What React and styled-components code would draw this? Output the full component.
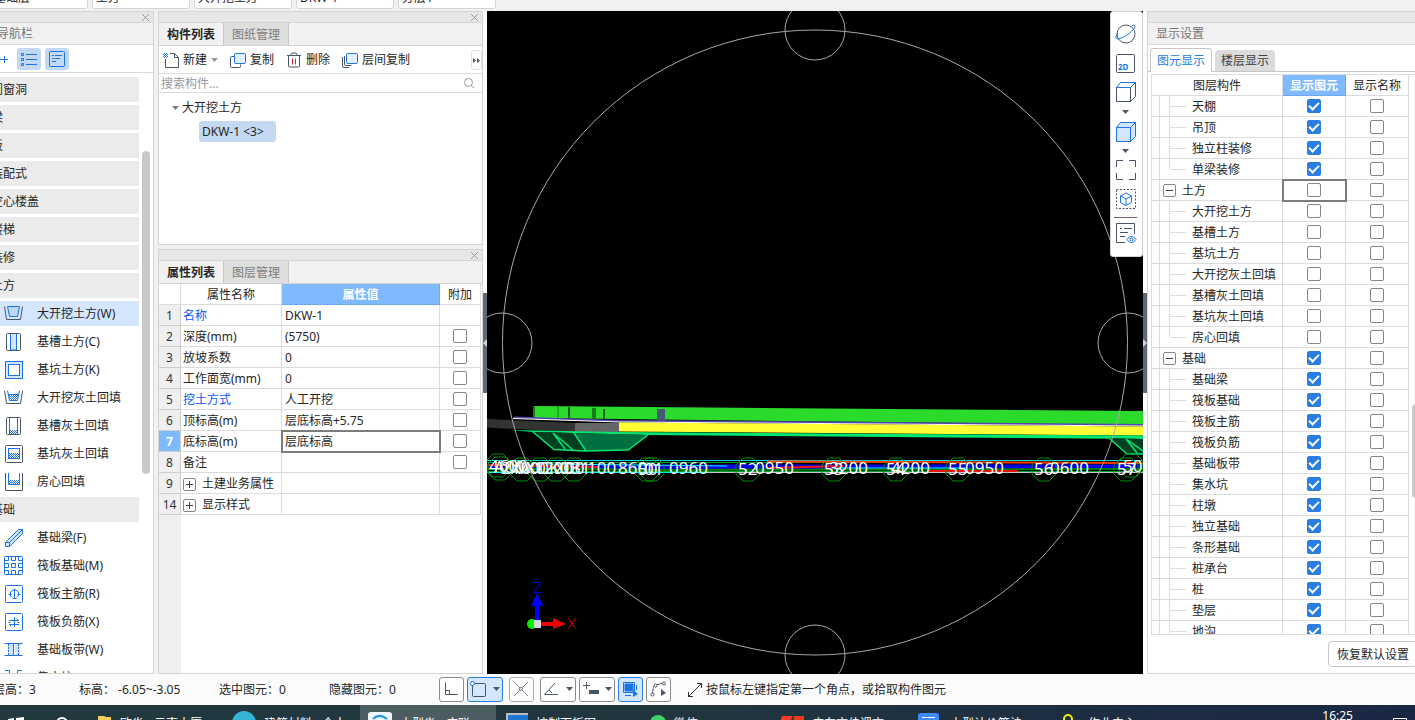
import { useState } from "react";
import styled, { createGlobalStyle } from "styled-components";

const GlobalStyle = createGlobalStyle`
* {
    box-sizing: border-box;
}
body {
    margin: 0;
    overflow: hidden;
    background: #f1f1f1;
}
body, button, input, select {
    font-family: "Noto Sans", "Noto Sans CJK SC", sans-serif;
    font-size: 12px;
    line-height: 20px;
    color: #262626;
}
button {
    padding: 0;
    border: 0;
    background: none;
    white-space: nowrap;
}
svg {
    display: block;
    flex: none;
}
`

const Page = styled.div`
display: flex;
flex-direction: column;
height: 100vh;
overflow: hidden;
`

/* top selectors */

const TopBar = styled.div`
display: flex;
align-items: flex-end;
gap: 4px;
height: 11px;
flex: none;
margin-left: -10px;
padding-bottom: 2px;
overflow: hidden;
`

const TopSelect = styled.select`
appearance: none;
width: 98px;
height: 22px;
flex: none;
padding: 0 3px;
background: #fff;
border: 1px solid #d4d4d4;
border-radius: 3px;
`

/* panels */

const Workspace = styled.div`
display: flex;
flex: 1;
min-height: 0;
margin-left: -12px;
`

const Panel = styled.section`
display: flex;
flex-direction: column;
min-height: 0;
background: #fff;
border: 1px solid #d4d4d4;
overflow: hidden;
`

const NavPanel = styled(Panel)`
width: 166px;
flex: none;
margin-right: 4px;
`

const MiddleColumn = styled.div`
display: flex;
flex-direction: column;
gap: 4px;
width: 325px;
flex: none;
`

const ComponentPanel = styled(Panel)`
height: 234px;
flex: none;
`

const PropertyPanel = styled(Panel)`
flex: 1;
`

const DisplayPanel = styled(Panel)`
width: 275px;
flex: none;
margin-right: -7px;
`

const Grip = styled.div`
display: flex;
justify-content: flex-end;
align-items: center;
height: 11px;
flex: none;
padding-right: 3px;
background: #e7e7e7;
border-bottom: 1px solid #d4d4d4;
`

const PanelTitle = styled.div`
height: 22px;
flex: none;
padding: 0 8px;
line-height: 22px;
color: #757575;
background: #f1f1f1;
border-bottom: 1px solid #d9d9d9;
`

const Tabs = styled.div`
display: flex;
height: 23px;
flex: none;
background: #f1f1f1;
border-bottom: 1px solid #d4d4d4;
`

const Tab = styled.button`
width: 65px;
padding-top: 2px;
font-weight: ${p => p.$active ? "bold" : "normal"};
color: ${p => p.$active ? "#262626" : "#7d7d7d"};
background: ${p => p.$active ? "#f1f1f1" : "#dedede"};
border-right: 1px solid #c3c6cb;
`

/* navigation */

const NavTools = styled.div`
display: flex;
align-items: center;
gap: 4px;
height: 28px;
flex: none;
padding-left: 5px;
border-bottom: 1px solid #d9d9d9;
`

const NavTool = styled.button`
display: flex;
justify-content: center;
align-items: center;
width: ${p => p.$active ? 24 : 19}px;
height: 22px;
background: ${p => p.$active ? "#c2d9f1" : "none"};
border-radius: 3px;
`

const NavBody = styled.div`
display: flex;
flex: 1;
min-height: 0;
overflow: hidden;
`

const NavList = styled.div`
display: flex;
flex-direction: column;
gap: 3px;
flex: 1;
padding-top: 4px;
`

const NavGroup = styled.button`
height: 25px;
flex: none;
padding-left: 2px;
text-align: left;
background: #ebebeb;
`

const NavItem = styled.button`
display: flex;
align-items: center;
gap: 13px;
height: 25px;
flex: none;
padding-left: 15px;
text-align: left;
background: ${p => p.$active ? "#d3e6fd" : "none"};
`

const NavTrack = styled.div`
width: 14px;
padding: 78px 3px 0;
`

const Thumb = styled.div`
width: 8px;
height: ${p => p.$size}px;
background: #c9c9c9;
border-radius: 4px;
`

/* component list */

const Tools = styled.div`
display: flex;
align-items: center;
gap: 12px;
height: 28px;
flex: none;
padding: 1px 0 0 4px;
border-bottom: 1px solid #dcdcdc;
`

const Tool = styled.button`
display: flex;
align-items: center;
gap: 4px;
`

const MoreTools = styled.button`
display: flex;
justify-content: center;
align-items: center;
width: 11px;
height: 20px;
margin-left: auto;
border: 1px solid #e0e0e0;
border-radius: 3px;
`

const Search = styled.label`
display: flex;
align-items: center;
height: 19px;
flex: none;
padding: 0 7px 0 2px;
border-bottom: 1px solid #dcdcdc;
`

const SearchInput = styled.input`
flex: 1;
height: 18px;
padding: 2px 0 0;
border: 0;
outline: 0;
&::placeholder {
    color: #999;
}
`

const Tree = styled.div`
display: flex;
flex-direction: column;
align-items: flex-start;
gap: 3px;
padding: 5px 13px;
`

const TreeParent = styled.button`
display: flex;
align-items: center;
gap: 3px;
height: 20px;
`

const TreeLeaf = styled.button`
min-width: 77px;
height: 21px;
margin-left: 27px;
padding: 0 3px;
text-align: left;
background: #c2d9f1;
border-radius: 3px;
`

/* tables */

const GridTable = styled.table`
table-layout: fixed;
border-collapse: separate;
border-spacing: 0;
`

const HeadCell = styled.th`
height: 21px;
padding: 2px 0 0;
line-height: 18px;
font-weight: ${p => p.$active ? "bold" : "normal"};
color: ${p => p.$active ? "#fff" : "#262626"};
background: ${p => p.$active ? "#7fbaff" : "#fff"};
border: 0 solid ${p => p.$active ? "#6ba9ee" : "#dcdcdc"};
border-width: 0 1px 1px 0;
`

const Cell = styled.td`
height: 21px;
padding: ${p => p.$name ? "2px 2px 0" : "2px 3px 0"};
line-height: 18px;
white-space: nowrap;
color: ${p => p.$link ? "#0f55ff" : "#262626"};
border: 0 solid #dcdcdc;
border-width: 0 1px 1px 0;
outline: ${p => p.$focused ? "2px solid #7c7c7c" : "none"};
outline-offset: -1px;
`

const FlushCell = styled(Cell)`
padding: 0;
`

const IndexCell = styled.td`
height: 21px;
padding: 2px 0 0;
line-height: 18px;
text-align: center;
font-weight: ${p => p.$active ? "bold" : "normal"};
color: ${p => p.$active ? "#fff" : "#333"};
background: ${p => p.$active ? "#7fbaff" : "#efefef"};
border: 0 solid #cdcdcd;
border-width: 0 1px 1px 0;
`

const PropertyBody = styled.div`
flex: 1;
background: linear-gradient(to right, #efefef 22px, #fff 22px);
`

const Expandable = styled.span`
display: flex;
align-items: center;
gap: 6px;
`

const ToggleButton = styled.button`
display: flex;
justify-content: center;
align-items: center;
width: 13px;
height: 13px;
flex: none;
background: #fff;
border: 1px solid #858585;
border-radius: 2px;
`

const Check = styled.input`
appearance: none;
display: block;
width: 14px;
height: 14px;
margin: 0 auto;
background: #fff;
border: 1px solid #858585;
border-radius: 2px;
&:checked {
    background: #2a7de1;
    border-color: #2a7de1;
}
&:checked::after {
    content: "";
    display: block;
    width: 4px;
    height: 8px;
    margin: 0 auto;
    border: solid #fff;
    border-width: 0 2px 2px 0;
    transform: rotate(45deg);
}
`

/* display settings */

const PillTabs = styled.div`
display: flex;
align-items: flex-end;
gap: 3px;
height: 27px;
flex: none;
padding-left: 2px;
border-bottom: 1px solid #c6c6c6;
`

const PillTab = styled.button`
width: ${p => p.$active ? 62 : 60}px;
height: ${p => p.$active ? 24 : 21}px;
margin-bottom: ${p => p.$active ? -1 : 0}px;
color: ${p => p.$active ? "#2a7de1" : "#404040"};
background: ${p => p.$active ? "#fff" : "#dcdcdc"};
border: ${p => p.$active ? "1px solid #c6c6c6" : "0"};
border-bottom: 0;
border-radius: 4px 4px 0 0;
`

const LayerBody = styled.div`
display: flex;
flex: 1;
min-height: 0;
margin: 2px 0 0 3px;
border: 1px solid #dcdcdc;
overflow: hidden;
`

const LayerTrack = styled.div`
padding: 329px 0 0 3px;
`

const LayerName = styled.span`
display: flex;
align-items: center;
height: 20px;
`

const Guide = styled.span`
width: ${p => p.$width}px;
height: ${p => p.$half ? 10 : 20}px;
align-self: flex-start;
border-right: 1px solid #dcdcdc;
`

const Stub = styled.span`
width: ${p => p.$width}px;
height: 1px;
background: #dcdcdc;
`

const LayerText = styled.label`
margin-left: 6px;
padding-top: 2px;
`

const Footer = styled.div`
display: flex;
justify-content: flex-end;
align-items: center;
height: 38px;
flex: none;
padding-right: 3px;
`

const ResetButton = styled.button`
height: 26px;
padding: 2px 8px 0;
background: #fff;
border: 1px solid #c6c6c6;
border-radius: 4px;
`

/* model view */

const Splitter = styled.div`
display: flex;
align-items: center;
width: 4px;
flex: none;
background: #fff;
`

const SplitterHandle = styled.button`
display: flex;
justify-content: center;
align-items: center;
width: 4px;
height: 100px;
background: #5e6a78;
`

const Viewport = styled.main`
position: relative;
flex: 1;
min-width: 0;
background: #000;
overflow: hidden;
`

const ViewTools = styled.div`
position: absolute;
top: 0;
right: 0;
display: flex;
flex-direction: column;
align-items: center;
width: 33px;
height: 246px;
padding: 11px 2px 0 0;
background: #fff;
border: 1px solid #d4d4d4;
border-radius: 3px;
`

const ViewTool = styled.button`
display: flex;
justify-content: center;
align-items: center;
width: 24px;
height: ${p => p.$height}px;
`

const ViewDivider = styled.hr`
width: 23px;
margin: 0 0 2px;
border: 0;
border-top: 1px solid #666;
`

/* status bar */

const StatusBar = styled.footer`
display: flex;
align-items: center;
height: 31px;
flex: none;
margin-left: -7px;
background: #fbfbfb;
`

const Status = styled.span`
width: ${p => p.$width}px;
flex: none;
white-space: pre;
`

const StatusTools = styled.div`
display: flex;
gap: 3px;
margin-right: 16px;
`

const StatusTool = styled.button`
display: flex;
justify-content: center;
align-items: center;
gap: 6px;
width: ${p => p.$wide ? 36 : 25}px;
height: 25px;
margin-right: ${p => p.$spaced ? 3 : 0}px;
background: ${p => p.$active ? "#d3e6fd" : "#fff"};
border: 1px solid ${p => p.$active ? "#2a7de1" : "#8c8c8c"};
border-radius: 3px;
opacity: ${p => p.$faded ? 0.7 : 1};
`

const Hint = styled.span`
display: flex;
align-items: center;
gap: 3px;
white-space: nowrap;
`

/* taskbar */

const Taskbar = styled.div`
display: flex;
align-items: flex-start;
height: 15px;
flex: none;
background: linear-gradient(to right, #22393f, #21353f 50%, #1a2744);
overflow: hidden;
`

const Task = styled.button`
display: flex;
align-items: flex-start;
gap: 8px;
width: ${p => p.$width}px;
height: 40px;
flex: none;
padding-left: 8px;
color: #fff;
text-align: left;
background: ${p => p.$active ? "#4b5d63" : "none"};
overflow: hidden;
`

const TaskText = styled.span`
padding-top: 9px;
`

const Tray = styled.div`
display: flex;
margin-left: auto;
padding-right: 7px;
color: #fff;
`

const Clock = styled.time`
margin-right: 39px;
padding-top: 1px;
`

const BLUE = "#1a73e8";
const DARK = "#4a5568";

const CloseIcon = () => (
    <svg width="9" height="9" fill="none" stroke="#999">
        <path d="M1 1l7 7M8 1l-7 7" />
    </svg>
);

const Caret = ({ color = DARK }) => (
    <svg width="7" height="5" fill={color}>
        <path d="M0 0h7l-3.500 4z" />
    </svg>
);

const ToggleIcon = ({ plus }) => (
    <svg width="7" height="7" stroke="#404040">
        <path d={plus ? "M0 3.500h7M3.500 0v7" : "M0 3.500h7"} />
    </svg>
);

const Dots = () => (
    <pattern id="dots" width="2" height="2" patternUnits="userSpaceOnUse">
        <path d="M0 0h1v1h-1zM1 1h1v1h-1z" fill={BLUE} />
    </pattern>
);

const navIcons = {
    pit: <><path d="M.5 2.500l2 13h14l2-13" stroke={DARK} /><path d="M3.500 2.500h12l-2 10h-8z" fill="#bcd8fa" stroke={BLUE} /></>,
    trench: <><rect x="2.500" y="1.500" width="14" height="17" rx="1" stroke={DARK} /><path d="M6.500 2v16h6V2" fill="#d3e6fd" stroke={BLUE} /></>,
    hole: <><rect x="1.500" y="1.500" width="17" height="17" fill="#d3e6fd" stroke={BLUE} /><rect x="4.500" y="4.500" width="11" height="11" fill="#fff" stroke={BLUE} /></>,
    pitFill: <><path d="M.5 2.500l2 13h14l2-13" stroke={DARK} /><path d="M4.500 7h10l-1 5h-8z" fill="url(#dots)" /><path d="M3.500 2.500l2 10h8l2-10M4 6.500h11" stroke={BLUE} /></>,
    trenchFill: <><rect x="2.500" y="1.500" width="14" height="17" rx="1" stroke={DARK} /><path d="M6 14h7v4H6z" fill="url(#dots)" /><path d="M5.500 2v16M13.500 2v16" stroke={BLUE} /></>,
    holeFill: <><rect x="1.500" y="1.500" width="17" height="17" rx="1" stroke={DARK} /><path d="M5 9h10v6H5z" fill="url(#dots)" /><rect x="4.500" y="4.500" width="11" height="10" stroke={BLUE} /></>,
    roomFill: <><path d="M1.500 1v17.500h17V1" stroke={DARK} /><path d="M5 8h10v4H5z" fill="url(#dots)" /><path d="M4.500 1v11.500h11V1" stroke={BLUE} /></>,
    beam: <><path d="M1.500 14.500L14.500 1.500h4v4L5.500 18.500h-4z" fill="#d3e6fd" stroke={BLUE} /><path d="M1.500 14.500h4v4M5.500 14.500l13-13" stroke={BLUE} /></>,
    raft: <><rect x=".5" y=".5" width="18" height="18" rx="1" stroke={BLUE} /><path d="M4.500 .5v4h-4M.5 7.500h4v4h-4M.5 14.500h4v4M7.500 .5v4h4v-4M14.500 .5v4h4M18.500 7.500h-4v4h4M18.500 14.500h-4v4M7.500 18.500v-4h4v4M7.500 7.500h4v4h-4z" stroke={BLUE} /></>,
    rebarMain: <><rect x="1.500" y="1.500" width="17" height="17" rx="1" stroke={BLUE} /><path d="M10.500 5v10M10 5.500L6.500 8v4L8 13.500M11 5.500L14.500 8v4l-2 1.500M4.500 10.500h3M13.500 10.500h3M8.500 14.500h4" stroke={BLUE} /></>,
    rebarNeg: <><rect x="1.500" y="1.500" width="17" height="17" rx="1" stroke={BLUE} /><path d="M10.500 5v10M5 8.500h9.500l-2-2M15 12.500H5.500l2 2M4.500 10.500h2M13.500 10.500h2" stroke={BLUE} /></>,
    band: <><path d="M4 4h5v12H4zM11 4h5v12h-5z" fill="#d3e6fd" /><path d="M.5 3.500h18M.5 15.500h18M9.500 4v12" stroke={BLUE} /><path d="M4.500 4v12M14.500 4v12" stroke={BLUE} strokeDasharray="2 1" /></>,
    sump: <path d="M1 2.500h4.500v9h8v-9H18" stroke={BLUE} />,
};

const NavIcon = ({ name }) => (
    <svg width="20" height="20" fill="none">
        <defs><Dots /></defs>
        {navIcons[name]}
    </svg>
);

const toolIcons = {
    new: <><path d="M7 1.500h4.500l4 4v10h-13V7M11.500 1.500v4h4" stroke={DARK} /><path d="M0 1h5v5H0z" fill="url(#dots)" /></>,
    copy: <><path d="M4.500 4.500h-3a1 1 0 0 0-1 1v9a1 1 0 0 0 1 1h8a1 1 0 0 0 1-1v-2" stroke={DARK} /><rect x="4.500" y="1.500" width="11" height="10" rx="1" fill="#e3effd" stroke={BLUE} /></>,
    trash: <><path d="M1 3.500h14M4.500 3l1.500-2h4l1.500 2M2.500 4v10a1 1 0 0 0 1 1h9a1 1 0 0 0 1-1V4" stroke={DARK} /><path d="M6.500 6.500v6M9.500 6.500v6" stroke="#cf2a2a" /></>,
    layers: <><path d="M.5 5v9a1.500 1.500 0 0 0 1.500 1.500h5M2.500 4v8.500a1 1 0 0 0 1 1h6" stroke={DARK} /><rect x="4.500" y="1.500" width="11" height="10" rx="1" fill="#e3effd" stroke={BLUE} /></>,
};

const ToolIcon = ({ name }) => (
    <svg width="16" height="17" fill="none">{toolIcons[name]}</svg>
);

const viewIcons = {
    orbit: <><circle cx="11" cy="11" r="9" stroke={DARK} /><path d="M3 10c-2.500 3.500-3 6 0 5.800 4-.2 11-4.500 15-9C20.500 4 21 2 17 2.500" stroke={BLUE} /></>,
    flat: <><rect x="1.500" y="2.500" width="18" height="18" rx="1" stroke={DARK} /><text x="3" y="18" fontSize="8" fontWeight="bold" fill={BLUE}>2D</text></>,
    cube: <><path d="M1.500 6.500h14v14h-14zM15.500 20.500l5-5v-14" stroke={DARK} /><path d="M1.500 6.500l4-5h15l-5 5z" stroke={BLUE} /></>,
    solid: <><path d="M1.500 6.500l4-5h15v14l-5 5h-14z" fill="#d3e6fd" stroke={BLUE} /><path d="M1.500 6.500h14v14M15.500 6.500l5-5" stroke={BLUE} /></>,
    fit: <path d="M1.500 8V1.500H8M14 1.500h6.500V8M20.500 14v6.500H14M8 20.500H1.500V14" stroke={DARK} />,
    pick: <><rect x="1.500" y="1.500" width="19" height="19" stroke={DARK} strokeDasharray="2 1.500" /><path d="M11 5l5.500 3v6.500L11 17.500 5.500 14.500V8zM5.500 8L11 11l5.500-3M11 11v6.500" stroke={BLUE} /></>,
    list: <><path d="M10 20.500H1.500v-19h18V12M5 6.500h2M9 6.500h8M5 10.500h8M5 14.500h5" stroke={DARK} /><path d="M12 17.500c2.500-4 6.500-4 9 0-2.500 4-6.500 4-9 0z" fill="#fff" stroke={BLUE} /><circle cx="16.500" cy="17.500" r="1.500" stroke={BLUE} /></>,
};

const ViewIcon = ({ name }) => (
    <svg width="22" height="22" fill="none">{viewIcons[name]}</svg>
);

const statusIcons = {
    ortho: <path d="M2.500 1.500v12H15M2.500 9.500h4v4" stroke={DARK} />,
    rect: <><rect x="2.500" y="2.500" width="13" height="13" rx="1" stroke={DARK} /><circle cx="2.500" cy="2.500" r="2" fill="#fff" stroke={BLUE} /></>,
    cross: <><path d="M1 1l14 14M15 1L1 15" stroke={DARK} /><circle cx="8" cy="8" r="1.500" fill="#fff" stroke={DARK} /></>,
    angle: <path d="M12 2L1.500 13.500H15M6 9l3 3" stroke={DARK} />,
    offset: <><path d="M1 4.500h7M4.500 1v7" stroke={DARK} /><rect x="7" y="9" width="10" height="4" fill={DARK} /></>,
    stack: <><path d="M1.500 1.500h11v10h-11z" stroke={BLUE} /><path d="M3 3h8v7H3z" fill={BLUE} stroke={BLUE} /><path d="M3 14.500h6M14.500 4v5" stroke={BLUE} /><path d="M11 9l5 4-5 3z" fill={BLUE} /></>,
    arc: <><path d="M2.500 13C3 7 4 4.500 5 4l9-2" stroke={DARK} /><circle cx="2.500" cy="13.500" r="1.500" fill="#fff" stroke={DARK} /><circle cx="5.500" cy="4.500" r="1.500" fill="#fff" stroke={DARK} /><circle cx="14" cy="2.500" r="1.500" fill="#fff" stroke={DARK} /><path d="M11 8l5 4-5 3z" fill={DARK} /></>,
};

const StatusIcon = ({ name }) => (
    <svg width="17" height="17" fill="none">{statusIcons[name]}</svg>
);

const navEntries = [
    { label: "门窗洞" },
    { label: "梁" },
    { label: "板" },
    { label: "装配式" },
    { label: "空心楼盖" },
    { label: "楼梯" },
    { label: "装修" },
    { label: "土方" },
    { label: "大开挖土方(W)", icon: "pit" },
    { label: "基槽土方(C)", icon: "trench" },
    { label: "基坑土方(K)", icon: "hole" },
    { label: "大开挖灰土回填", icon: "pitFill" },
    { label: "基槽灰土回填", icon: "trenchFill" },
    { label: "基坑灰土回填", icon: "holeFill" },
    { label: "房心回填", icon: "roomFill" },
    { label: "基础" },
    { label: "基础梁(F)", icon: "beam" },
    { label: "筏板基础(M)", icon: "raft" },
    { label: "筏板主筋(R)", icon: "rebarMain" },
    { label: "筏板负筋(X)", icon: "rebarNeg" },
    { label: "基础板带(W)", icon: "band" },
    { label: "集水坑(K)", icon: "sump" },
];

const properties = [
    { no: 1, name: "名称", value: "DKW-1", link: true },
    { no: 2, name: "深度(mm)", value: "(5750)", extra: true },
    { no: 3, name: "放坡系数", value: "0", extra: true },
    { no: 4, name: "工作面宽(mm)", value: "0", extra: true },
    { no: 5, name: "挖土方式", value: "人工开挖", link: true, extra: true },
    { no: 6, name: "顶标高(m)", value: "层底标高+5.75", extra: true },
    { no: 7, name: "底标高(m)", value: "层底标高", extra: true },
    { no: 8, name: "备注", value: "", extra: true },
    { no: 9, name: "土建业务属性", group: true },
    { no: 14, name: "显示样式", group: true },
];

const layer = (name, shown, extra) => ({ name, shown, ...extra });

const initialLayers = [
    layer("天棚", true),
    layer("吊顶", true),
    layer("独立柱装修", true),
    layer("单梁装修", true, { last: true }),
    layer("土方", false, { group: true, focused: true }),
    layer("大开挖土方", false),
    layer("基槽土方", false),
    layer("基坑土方", false),
    layer("大开挖灰土回填", false),
    layer("基槽灰土回填", false),
    layer("基坑灰土回填", false),
    layer("房心回填", false, { last: true }),
    layer("基础", true, { group: true }),
    layer("基础梁", true),
    layer("筏板基础", true),
    layer("筏板主筋", true),
    layer("筏板负筋", true),
    layer("基础板带", true),
    layer("集水坑", true),
    layer("柱墩", true),
    layer("独立基础", true),
    layer("条形基础", true),
    layer("桩承台", true),
    layer("桩", true),
    layer("垫层", true),
    layer("地沟", true),
];

const Navigation = () => {
    const [active, setActive] = useState("大开挖土方(W)");

    return (
        <NavPanel>
            <Grip><CloseIcon /></Grip>
            <PanelTitle>导航栏</PanelTitle>
            <NavTools>
                <NavTool type="button" aria-label="展开">
                    <svg width="12" height="12" stroke={BLUE}><path d="M1 6.500h9M6.500 3v7" /></svg>
                </NavTool>
                <NavTool $active type="button" aria-label="列表">
                    <svg width="16" height="14" fill="none" stroke={BLUE}>
                        <path d="M5 2.500h11M5 7.500h11M5 12.500h11" />
                        <path d="M.5 1.500h2v2h-2zM.5 6.500h2v2h-2zM.5 11.500h2v2h-2z" />
                    </svg>
                </NavTool>
                <NavTool $active type="button" aria-label="分组">
                    <svg width="16" height="16" fill="none" stroke={BLUE}>
                        <rect x=".5" y=".5" width="15" height="15" rx="1" />
                        <path d="M3 4.500h2M6 4.500h7M3 7.500h2M6 7.500h5M3 10.500h4" />
                    </svg>
                </NavTool>
            </NavTools>
            <NavBody>
                <NavList>
                    {navEntries.map(({ label, icon }) => icon ? (
                        <NavItem key={label} type="button" $active={label === active} onClick={() => setActive(label)}>
                            <NavIcon name={icon} />
                            {label}
                        </NavItem>
                    ) : (
                        <NavGroup key={label} type="button">{label}</NavGroup>
                    ))}
                </NavList>
                <NavTrack><Thumb $size={323} /></NavTrack>
            </NavBody>
        </NavPanel>
    );
};

const ComponentList = () => (
    <ComponentPanel>
        <Grip><CloseIcon /></Grip>
        <Tabs>
            <Tab $active type="button">构件列表</Tab>
            <Tab type="button">图纸管理</Tab>
        </Tabs>
        <Tools>
            <Tool type="button"><ToolIcon name="new" />新建 <Caret color="#999" /></Tool>
            <Tool type="button"><ToolIcon name="copy" />复制</Tool>
            <Tool type="button"><ToolIcon name="trash" />删除</Tool>
            <Tool type="button"><ToolIcon name="layers" />层间复制</Tool>
            <MoreTools type="button" aria-label="更多">
                <svg width="7" height="5" fill={DARK}><path d="M0 0l3 2.500-3 2.500zM4 0l3 2.500-3 2.500z" /></svg>
            </MoreTools>
        </Tools>
        <Search>
            <SearchInput placeholder="搜索构件..." aria-label="搜索构件" />
            <svg width="12" height="12" fill="none" stroke="#999">
                <circle cx="5.500" cy="5.500" r="4" />
                <path d="M8.500 8.500l2.500 2.500" />
            </svg>
        </Search>
        <Tree>
            <TreeParent type="button"><Caret color="#7d7d7d" />大开挖土方</TreeParent>
            <TreeLeaf type="button">DKW-1 &lt;3&gt;</TreeLeaf>
        </Tree>
    </ComponentPanel>
);

const PropertyList = () => (
    <PropertyPanel>
        <Grip><CloseIcon /></Grip>
        <Tabs>
            <Tab $active type="button">属性列表</Tab>
            <Tab type="button">图层管理</Tab>
        </Tabs>
        <PropertyBody>
            <GridTable style={{ width: 322, background: "#fff" }}>
                <colgroup>
                    <col width="22" />
                    <col width="101" />
                    <col width="158" />
                    <col width="41" />
                </colgroup>
                <thead>
                    <tr>
                        <HeadCell />
                        <HeadCell>属性名称</HeadCell>
                        <HeadCell $active>属性值</HeadCell>
                        <HeadCell>附加</HeadCell>
                    </tr>
                </thead>
                <tbody>
                    {properties.map(p => (
                        <tr key={p.no}>
                            <IndexCell $active={p.no === 7}>{p.no}</IndexCell>
                            <Cell $name $link={p.link}>
                                {p.group ? (
                                    <Expandable>
                                        <ToggleButton type="button" aria-label={p.name}><ToggleIcon plus /></ToggleButton>
                                        {p.name}
                                    </Expandable>
                                ) : p.name}
                            </Cell>
                            <Cell $focused={p.no === 7}>{p.value}</Cell>
                            <FlushCell>
                                {p.extra && <Check type="checkbox" aria-label={`${p.name} 附加`} />}
                            </FlushCell>
                        </tr>
                    ))}
                </tbody>
            </GridTable>
        </PropertyBody>
    </PropertyPanel>
);

const axisCircles = [[11, 454], [13, 457], [35, 458], [53, 458], [69, 458], [87, 458], [160, 458], [165, 458], [261, 458], [347, 458], [409, 458], [471, 458], [557, 458], [639, 458], [644, 454]];

const axisLabels = [
    [2, 461, "4600"], [7, 462, "A00"], [14, 463, "2X0"], [27, 463, "M00"], [39, 463, "X0"], [47, 463, "1200"], [62, 463, "K0"], [68, 463, "X00"], [84, 463, "31"],
    [100, 463, "100"], [131, 463, "860"], [151, 464, "50"], [157, 464, "01"], [182, 463, "0960"],
    [251, 464, "52"], [268, 463, "0950"], [337, 464, "53"], [342, 463, "3200"], [399, 464, "54"], [404, 463, "4200"],
    [461, 464, "55"], [478, 463, "0950"], [547, 464, "56"], [563, 463, "0600"], [630, 464, "57"], [636, 461, "50)"],
];

const Model = () => (
    <svg width="100%" height="100%" viewBox="0 0 656 663" preserveAspectRatio="xMidYMid slice" fill="none">
        <path d="M46 395L656 400v14L46 407z" fill="#2bdb2b" />
        <path d="M71 395v12" stroke="#167a16" />
        <path d="M82 396v12M117 398v10" stroke="#0e5c0e" strokeWidth="2" />
        <path d="M107 397v11" stroke="#167a16" strokeWidth="4" />
        <path d="M47 395v12" stroke="#167a16" strokeWidth="2" />
        <path d="M170 398h8v12h-8z" fill="#44587a" />
        <path d="M27 406.500l105 3.500 524 4" stroke="#5149a8" strokeWidth="2" />
        <path d="M26 407.500l106 3.500 524 4" stroke="#fff" />
        <path d="M0 408l88 4v9L0 416.500z" fill="#333" />
        <path d="M88 412h44v9H88z" fill="#666" />
        <path d="M132 411.500l524 4v9l-524-4z" fill="#ffff33" />
        <path d="M23 419l109 2 524 3.500v3.500l-495-4-115-3z" fill="#00e673" />
        <path d="M46 421l21 17.500 32 1.500-12-18z" fill="#004020" />
        <path d="M87 422l12 18 42-1 20-15z" fill="#007040" />
        <path d="M46 421l21 17.500 32 1.500 42-1 20-15M66 422l12 16M66 422l20 17M87 422l12 18" stroke="#00e673" strokeWidth="1.500" />
        <path d="M622 427l18 16h16v-15z" fill="#004020" />
        <path d="M622 427l18 16h16M639 428l11 14M639 428l17 12" stroke="#00e673" strokeWidth="1.500" />

        <path d="M0 456h656" stroke="#0000e6" strokeWidth="5" />
        <path d="M0 449.500h656" stroke="#00dede" />
        <path d="M0 451.500h656M0 460.500h656" stroke="#009c3c" />
        <path d="M280 450.500L656 452" stroke="#ff3a00" strokeWidth="2" />
        <path d="M0 458h90l80 1 486-1" stroke="#007a00" strokeWidth="2" />
        <path d="M0 454l110 2M280 457l76-2M440 460h90" stroke="#f01010" strokeWidth="2" />
        <path d="M60 453l180 2M350 457h130M0 461.500h220" stroke="#00ffff" />
        <path d="M220 461.500h436" stroke="#c8c8c8" />

        <g stroke="#008c00">
            {axisCircles.map(([x, y]) => (
                <path key={x} d={`M${x - 5} ${y - 11}h10l7 7v9l-7 7h-10l-7-7v-9z`} />
            ))}
        </g>
        <g fill="#fff" fontSize="17">
            {axisLabels.map(([x, y, text]) => <text key={x} x={x} y={y}>{text}</text>)}
        </g>

        <g stroke="#a8a8a8">
            <circle cx="328" cy="331.500" r="312.500" />
            <circle cx="328" cy="19" r="30" />
            <circle cx="328" cy="644" r="30" />
            <circle cx="15" cy="332" r="30" />
            <circle cx="641" cy="332" r="30" />
        </g>

        <circle cx="45" cy="613" r="5" fill="#00f000" />
        <path d="M48 609v-14h-4l6-13 6 13h-4v14z" fill="#0000ff" />
        <path d="M54 611h12v-4l13 6-13 5v-3H54z" fill="#f00000" />
        <path d="M47 609h7v8h-7z" fill="#d8d8d8" />
        <path d="M46.500 571.500h7L47 581.500h7.500" stroke="#0000e0" />
        <path d="M81.500 607.500l7 10M88.500 607.500l-7 10" stroke="#f00000" />
    </svg>
);

const LayerSettings = () => {
    const [layers, setLayers] = useState(initialLayers);

    const toggle = (name) => {
        setLayers(layers.map(l => l.name === name ? { ...l, shown: !l.shown } : l));
    }

    return (
        <DisplayPanel>
            <Grip />
            <PanelTitle>显示设置</PanelTitle>
            <PillTabs>
                <PillTab $active type="button">图元显示</PillTab>
                <PillTab type="button">楼层显示</PillTab>
            </PillTabs>
            <LayerBody>
                <div>
                    <GridTable style={{ width: 257 }}>
                        <colgroup>
                            <col width="131" />
                            <col width="63" />
                            <col width="63" />
                        </colgroup>
                        <thead>
                            <tr>
                                <HeadCell>图层构件</HeadCell>
                                <HeadCell $active>显示图元</HeadCell>
                                <HeadCell>显示名称</HeadCell>
                            </tr>
                        </thead>
                        <tbody>
                            {layers.map(l => (
                                <tr key={l.name}>
                                    <FlushCell>
                                        <LayerName>
                                            <Guide $width={8} />
                                            {l.group ? (
                                                <>
                                                    <Stub $width={3} />
                                                    <ToggleButton type="button" aria-label={`折叠${l.name}`}><ToggleIcon /></ToggleButton>
                                                </>
                                            ) : (
                                                <>
                                                    <Guide $width={10} $half={l.last} />
                                                    <Stub $width={16} />
                                                </>
                                            )}
                                            <LayerText htmlFor={`layer-${l.name}`}>{l.name}</LayerText>
                                        </LayerName>
                                    </FlushCell>
                                    <FlushCell $focused={l.focused}>
                                        <Check type="checkbox" id={`layer-${l.name}`} checked={l.shown} onChange={() => toggle(l.name)} />
                                    </FlushCell>
                                    <FlushCell>
                                        <Check type="checkbox" aria-label={`${l.name} 显示名称`} />
                                    </FlushCell>
                                </tr>
                            ))}
                        </tbody>
                    </GridTable>
                </div>
                <LayerTrack><Thumb $size={94} /></LayerTrack>
            </LayerBody>
            <Footer>
                <ResetButton type="button">恢复默认设置</ResetButton>
            </Footer>
        </DisplayPanel>
    );
};

const App = () => {
    return (
        <Page>
            <GlobalStyle />
            <TopBar>
                {["基础层", "土方", "大开挖土方", "DKW-1", "分层1"].map(name => (
                    <TopSelect key={name} aria-label={name}>
                        <option>{name}</option>
                    </TopSelect>
                ))}
            </TopBar>
            <Workspace>
                <Navigation />
                <MiddleColumn>
                    <ComponentList />
                    <PropertyList />
                </MiddleColumn>
                <Splitter>
                    <SplitterHandle type="button" aria-label="收起左侧">
                        <svg width="4" height="8" fill="#d0d4d9"><path d="M4 0v8L0 4z" /></svg>
                    </SplitterHandle>
                </Splitter>
                <Viewport>
                    <Model />
                    <ViewTools>
                        <ViewTool type="button" aria-label="动态观察" $height={22}><ViewIcon name="orbit" /></ViewTool>
                        <ViewTool type="button" aria-label="二维" $height={36}><ViewIcon name="flat" /></ViewTool>
                        <ViewTool type="button" aria-label="轴测" $height={22}><ViewIcon name="cube" /></ViewTool>
                        <ViewTool type="button" aria-label="轴测选项" $height={18}><Caret /></ViewTool>
                        <ViewTool type="button" aria-label="实体" $height={22}><ViewIcon name="solid" /></ViewTool>
                        <ViewTool type="button" aria-label="实体选项" $height={16}><Caret /></ViewTool>
                        <ViewTool type="button" aria-label="全屏" $height={22}><ViewIcon name="fit" /></ViewTool>
                        <ViewTool type="button" aria-label="局部三维" $height={36}><ViewIcon name="pick" /></ViewTool>
                        <ViewDivider />
                        <ViewTool type="button" aria-label="显示设置" $height={26}><ViewIcon name="list" /></ViewTool>
                    </ViewTools>
                </Viewport>
                <Splitter>
                    <SplitterHandle type="button" aria-label="收起右侧">
                        <svg width="4" height="8" fill="#d0d4d9"><path d="M0 0v8l4-4z" /></svg>
                    </SplitterHandle>
                </Splitter>
                <LayerSettings />
            </Workspace>
            <StatusBar>
                <Status $width={86}>层高：3</Status>
                <Status $width={140}>标高： -6.05~-3.05</Status>
                <Status $width={110}>选中图元：0</Status>
                <Status $width={110}>隐藏图元：0</Status>
                <StatusTools>
                    <StatusTool type="button" aria-label="正交"><StatusIcon name="ortho" /></StatusTool>
                    <StatusTool type="button" aria-label="矩形" $wide $active $spaced><StatusIcon name="rect" /><Caret /></StatusTool>
                    <StatusTool type="button" aria-label="交点" $faded $spaced><StatusIcon name="cross" /></StatusTool>
                    <StatusTool type="button" aria-label="角度" $wide><StatusIcon name="angle" /><Caret /></StatusTool>
                    <StatusTool type="button" aria-label="偏移" $wide><StatusIcon name="offset" /><Caret /></StatusTool>
                    <StatusTool type="button" aria-label="跨图层选择" $active><StatusIcon name="stack" /></StatusTool>
                    <StatusTool type="button" aria-label="折线选择"><StatusIcon name="arc" /></StatusTool>
                </StatusTools>
                <Hint>
                    <svg width="16" height="16" fill="none" stroke="#333">
                        <path d="M1 15L15 1M10 1.500h4.500V6M1.500 10v4.500H6" />
                    </svg>
                    按鼠标左键指定第一个角点，或拾取构件图元
                </Hint>
            </StatusBar>
            <Taskbar>
                <Task type="button" aria-label="开始" $width={46}>
                    <svg width="16" height="16" fill="#fff"><path d="M0 14l6-1v3H0zM8 13l8-1v4H8z" /></svg>
                </Task>
                <Task type="button" aria-label="搜索" $width={44}>
                    <svg width="18" height="18" fill="none" stroke="#fff" strokeWidth="2"><circle cx="8" cy="18" r="5" /></svg>
                </Task>
                <Task type="button" $width={134}>
                    <svg width="14" height="16"><path d="M0 11h6l2 1h5v6H0z" fill="#f8cd57" /></svg>
                    <TaskText>欧炎 - 云南大厦</TaskText>
                </Task>
                <Task type="button" $width={136}>
                    <svg width="24" height="16"><circle cx="12" cy="18" r="12" fill="#35b4d6" /></svg>
                    <TaskText>建筑材料 - 个人</TaskText>
                </Task>
                <Task type="button" $active $width={136}>
                    <svg width="24" height="16"><rect y="7" width="24" height="20" rx="3" fill="#eef6ff" /><path d="M5 14c4-4 9-4 14 0" stroke="#2196e8" strokeWidth="2" fill="none" /></svg>
                    <TaskText>大型炎 - 广联</TaskText>
                </Task>
                <Task type="button" $width={138}>
                    <svg width="24" height="16"><rect x="3" y="9" width="22" height="14" fill="#1c76d2" stroke="#b8bcc0" strokeWidth="2" /></svg>
                    <TaskText>控制面板图</TaskText>
                </Task>
                <Task type="button" $width={138}>
                    <svg width="24" height="16"><circle cx="16" cy="18" r="8" fill="#43d168" /></svg>
                    <TaskText>微信</TaskText>
                </Task>
                <Task type="button" $width={138}>
                    <svg width="24" height="16"><path d="M2 11h11l-3 6H0zM14 11h10v6H13z" fill="#f03a22" /></svg>
                    <TaskText>广东文佳课文</TaskText>
                </Task>
                <Task type="button" $width={138}>
                    <svg width="24" height="16"><rect y="8" width="21" height="16" rx="3" fill="#3e8dff" /><path d="M4 12.500h13" stroke="#fff" /></svg>
                    <TaskText>大型计价算法</TaskText>
                </Task>
                <Task type="button" $width={110}>
                    <svg width="24" height="16"><circle cx="12" cy="14" r="4" fill="none" stroke="#f5e900" strokeWidth="2" /></svg>
                    <TaskText>作业中心</TaskText>
                </Task>
                <Tray>
                    <Clock>16:25</Clock>
                    <svg width="16" height="16" fill="none" stroke="#fff"><path d="M1.500 16v-2.500h13V16" /></svg>
                </Tray>
            </Taskbar>
        </Page>
    );
};

export default App;
